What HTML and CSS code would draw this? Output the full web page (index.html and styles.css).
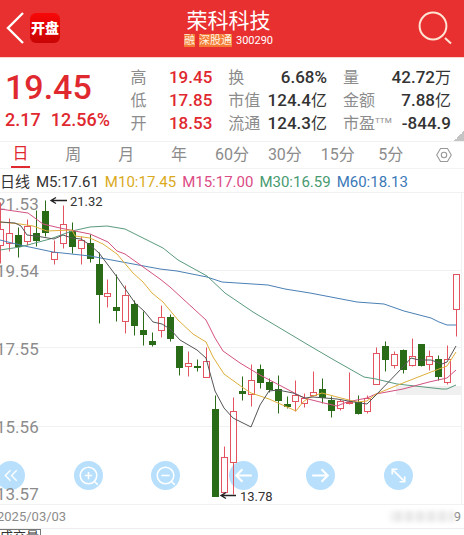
FILE: index.html
```html
<!DOCTYPE html>
<html lang="zh-CN">
<head>
    <meta charset="utf-8">
    <meta name="viewport" content="width=device-width, initial-scale=1">
    <title>荣科科技 300290</title>
    <link rel="stylesheet" href="styles.css">
</head>
<body>
    <header class="header">
        <div class="header-left">
            <button class="icon-button" aria-label="返回">
                <svg width="20" height="34" viewBox="0 0 20 34"><path d="M18 2 3 17l15 15" fill="none" stroke="#fff" stroke-width="2.4"/></svg>
            </button>
            <a class="logo" href="#">开盘</a>
        </div>
        <div class="title">
            <h1>荣科科技</h1>
            <p><span class="tag">融</span><span class="tag">深股通</span><span>300290</span></p>
        </div>
        <button class="icon-button search" aria-label="搜索">
            <svg width="36" height="36" viewBox="0 0 36 36" fill="none" stroke="#ffe3d3" stroke-width="2"><circle cx="17" cy="16" r="13.4"/><path d="m29 28 6 5.5"/></svg>
        </button>
    </header>

    <section class="quote">
        <div class="price">
            <strong>19.45</strong>
            <p><span>2.17</span><span>12.56%</span></p>
        </div>
        <dl class="stats up">
            <dt>高</dt><dd>19.45</dd>
            <dt>低</dt><dd>17.85</dd>
            <dt>开</dt><dd>18.53</dd>
        </dl>
        <dl class="stats">
            <dt>换</dt><dd>6.68%</dd>
            <dt>市值</dt><dd>124.4<span>亿</span></dd>
            <dt>流通</dt><dd>124.3<span>亿</span></dd>
        </dl>
        <dl class="stats">
            <dt>量</dt><dd>42.72<span>万</span></dd>
            <dt>金额</dt><dd>7.88<span>亿</span></dd>
            <dt>市盈<sup>TTM</sup></dt><dd>-844.9</dd>
        </dl>
    </section>

    <nav class="tabs">
        <button class="active">日</button>
        <button>周</button>
        <button>月</button>
        <button>年</button>
        <button>60分</button>
        <button>30分</button>
        <button>15分</button>
        <button>5分</button>
        <button aria-label="设置">
            <svg width="16" height="16" viewBox="0 0 16 16" fill="none" stroke="#999" stroke-width="1.1"><path d="M4.500 1.500h7L15.300 8l-3.800 6.500h-7L.7 8z"/><circle cx="8" cy="8" r="2.700"/></svg>
        </button>
    </nav>

    <div class="averages">
        <span>日线</span>
        <span>M5:17.61</span>
        <span class="m10">M10:17.45</span>
        <span class="m15">M15:17.00</span>
        <span class="m30">M30:16.59</span>
        <span class="m60">M60:18.13</span>
    </div>

    <main class="chart">
        <div class="tools">
            <button aria-label="更早"><svg viewBox="0 0 28 28"><path d="m14 9-5 5 5 5M20 9l-5 5 5 5" stroke-width="1.3"/></svg></button>
            <button aria-label="放大"><svg viewBox="0 0 28 28"><circle cx="14" cy="14" r="8"/><path d="M10.500 14h7M14 10.500v7M20 20l3 3"/></svg></button>
            <button aria-label="缩小"><svg viewBox="0 0 28 28"><circle cx="14" cy="14" r="8"/><path d="M10 14h8M20 20l3 3"/></svg></button>
            <button aria-label="左移"><svg viewBox="0 0 28 28"><path d="M22 14H7M13 8l-6 6 6 6" stroke-width="2"/></svg></button>
            <button aria-label="右移"><svg viewBox="0 0 28 28"><path d="M6 14h15M15 8l6 6-6 6" stroke-width="2"/></svg></button>
            <button aria-label="全屏"><svg viewBox="0 0 28 28"><path d="m9 9 10 10M8 13V8h5M20 15v5h-5" stroke-width="1.6"/></svg></button>
        </div>
        <svg class="plot" viewBox="0 192 464 313">
            <path class="grid" d="M0 192.500h464M0 270.500h461M0 347.500h461M0 426.500h461M0 504.500h464M461.500 192v313"/>
            <path fill="#f0f0f0" d="M396 386h65v9h-65z"/>
            <g class="axis">
                <text x="-4" y="210">21.53</text>
                <text x="-4" y="277">19.54</text>
                <text x="-4" y="355">17.55</text>
                <text x="-4" y="433">15.56</text>
                <text x="-4" y="500">13.57</text>
            </g>
            <g id="candles"></g>
            <g class="lines">
                <polyline class="line60" points="0,240 20,245 53,252 90,256 117,261 160,269 177,271 207,277 222,282 268,285 285,289 310,293 357,302 384,304 404,311 431,318 439,322 447,325 456,325"/>
                <polyline class="line30" points="0,250 20,247 50,239 72,231 90,227 107,226 125,229 137,235 163,248 178,260 207,276 225,293 253,312 310,346 334,360 364,377 376,379 397,384 442,389 447,389 456,385"/>
                <polyline class="line15" points="0,209 28,213 43,224 60,228 90,234 108,242 117,251 125,254 160,279 170,287 206,320 215,338 223,351 240,363 260,375 283,387 304,398 324,403 337,406 347,402 367,398 376,394 403,389 429,382 447,378 456,370"/>
                <polyline class="line10" points="0,222 20,224 33,226 47,231 72,230 75,236 90,238 103,244 117,254 133,273 143,282 152,293 163,302 178,320 193,334 206,342 213,357 224,374 242,387 251,393 269,399 287,407 296,411 303,402 310,397 322,393 341,398 357,402 367,401 376,394 403,383 431,372 447,366 456,352"/>
                <polyline class="line5" points="0,222 15,223 21,226 27,235 36,236 54,239 63,235 72,238 81,239 90,245 99,253 117,277 135,303 144,311 153,322 162,324 170,329 180,340 197,350 206,358 210,373 215,391 224,408 233,418 251,427 260,405 269,391 278,390 293,393 305,398 313,397 337,399 354,402 367,404 376,395 403,367 411,358 419,360 431,360 442,364 447,362 456,346"/>
            </g>
            <g class="marks">
                <path d="M52 200.500h15M56 197.500l-5 3 5 3M222 495.500h14M226 492.500l-5 3 5 3"/>
                <text x="70" y="206">21.32</text>
                <text x="240" y="501">13.78</text>
            </g>
        </svg>
    </main>

    <div class="dates">
        <span class="from">2025/03/03</span>
        <span class="faded"><i></i>9</span>
    </div>
    <div class="volume"><span>成交量</span></div>

    <script src="script.js"></script>
</body>
</html>
```

FILE: styles.css
```css
* {
    box-sizing: border-box;
}
html {
    overflow: hidden;
}
body {
    margin: 0;
    background-color: #fff;
    color: #333;
    font-family: Roboto, "Noto Sans CJK SC", sans-serif;
}
h1, p, dl, dd {
    margin: 0;
}
button {
    padding: 0;
    border: none;
    background: none;
    color: inherit;
    font: inherit;
    cursor: pointer;
}
svg {
    display: block;
}

/* Header */
.header {
    display: grid;
    grid-template-columns: 1fr auto 1fr;
    align-items: center;
    height: 58px;
    padding: 0 12px 2px 5px;
    background-color: #e93030;
    border-bottom: 1px solid #fbd5cc;
    color: #fff;
}
.header-left {
    display: flex;
    align-items: center;
    gap: 5px;
}
.logo {
    width: 30px;
    height: 30px;
    border-radius: 6px;
    background: linear-gradient(#f80808, #c80505);
    color: #fff;
    font-size: 14px;
    font-weight: 900;
    line-height: 30px;
    text-align: center;
    text-decoration: none;
}
.title {
    text-align: center;
}
.title h1 {
    font-size: 21px;
    font-weight: 400;
    line-height: 26px;
}
.title p {
    display: flex;
    gap: 4px;
    justify-content: center;
    font-size: 11px;
    line-height: 14px;
}
.tag {
    height: 13px;
    background-color: #f47b35;
    color: #fff3e4;
}
.search {
    justify-self: end;
}

/* Quote */
.quote {
    display: grid;
    grid-template-columns: 115fr 82fr 99fr 107fr;
    gap: 16px;
    height: 84px;
    padding: 8px 13px 0 0;
    border-bottom: 1px solid #f1f1f1;
    background: linear-gradient(135deg, transparent 50%, #c4c4c4 50%) right bottom / 10px 10px no-repeat;
}
.price {
    padding-left: 5px;
    color: #e0282f;
    font-weight: 500;
    white-space: nowrap;
}
.price strong {
    display: block;
    font-size: 34px;
    font-weight: 500;
    line-height: 42px;
}
.price p {
    display: flex;
    gap: 10px;
    font-size: 18px;
    line-height: 24px;
}
.stats {
    display: grid;
    grid-template-columns: auto 1fr;
    grid-auto-rows: 23px;
    line-height: 23px;
    white-space: nowrap;
}
.stats dt {
    color: #8c8c8c;
    font-size: 16px;
}
.stats dd {
    font-size: 17px;
    font-weight: 500;
    text-align: right;
}
.stats dd span {
    font-size: 16px;
    font-weight: 400;
}
.stats sup {
    font-size: 8px;
    line-height: 0;
}
.up dd {
    color: #e0282f;
}

/* Period tabs */
.tabs {
    display: grid;
    grid-template-columns: repeat(9, 1fr);
    height: 27px;
    margin: 0 -6px;
    border-bottom: 1px solid #f4f4f4;
    color: #8c8c8c;
    font-size: 16px;
    line-height: 24px;
}
.tabs button {
    display: flex;
    justify-content: center;
    align-items: center;
}
.tabs .active {
    justify-self: center;
    width: 19px;
    border-bottom: 2px solid #e0282f;
    color: #e0282f;
}
.averages {
    display: flex;
    gap: 6px;
    height: 23px;
    font-size: 15px;
    line-height: 27px;
    white-space: nowrap;
}
.m10 { color: #dbaa1c; }
.m15 { color: #dc4b85; }
.m30 { color: #479a70; }
.m60 { color: #3b78b7; }

/* Chart */
.chart {
    position: relative;
}
.plot {
    position: relative;
    width: 100%;
    pointer-events: none;
}
.tools {
    position: absolute;
    right: 51px;
    bottom: 15px;
    left: -4px;
    display: flex;
    justify-content: space-between;
}
.tools button {
    width: 29px;
    height: 29px;
    border-radius: 50%;
    background-color: #b8e0fd;
}
.tools svg {
    fill: none;
    stroke: #fff;
    stroke-width: 1.5;
}
.grid {
    fill: none;
    stroke: #f1f1f1;
}
.axis {
    fill: #8c8c8c;
    font-size: 17px;
}
.lines polyline {
    fill: none;
    stroke-width: 1;
}
.line5 { stroke: #555; }
.line10 { stroke: #dfaf3c; }
.line15 { stroke: #d35282; }
.line30 { stroke: #5b9a7d; }
.line60 { stroke: #4a80b5; }
.rise {
    fill: #fff;
    stroke: #e25560;
}
.fall {
    fill: #2a6b18;
    stroke: #2a6b18;
}
.marks {
    fill: #333;
    font-size: 13px;
}
.marks path {
    fill: none;
    stroke: #222;
    stroke-width: 1.3;
}

/* Below the chart */
.dates {
    display: flex;
    justify-content: space-between;
    height: 24px;
    padding-right: 3px;
    border-bottom: 1px solid #eee;
    color: #8c8c8c;
    font-size: 13px;
    line-height: 23px;
}
.from {
    margin-left: -3px;
}
.faded {
    display: flex;
    align-items: center;
}
.faded i {
    width: 64px;
    height: 11px;
    background: repeating-linear-gradient(90deg, #f2f2f2 0 6px, #ddd 8px, #f6f6f6 11px);
    filter: blur(2px);
}
.volume {
    font-size: 13px;
    line-height: 13px;
}
.volume span {
    display: inline-block;
    padding-right: 1px;
    border: 1px solid #777;
    border-left: none;
}
```

FILE: script.js
```js
// x, body top, body bottom, wick top, wick bottom, 1 = rise / 0 = fall
const candles = [
    [0, 229, 245, 202, 263, 1],
    [9, 233, 243, 218, 251, 1],
    [18, 235, 246, 227, 257, 0],
    [27, 226, 241, 219, 245, 1],
    [36, 233, 240, 210, 246, 0],
    [45, 211, 232, 200, 236, 0],
    [54, 252, 259, 240, 264, 1],
    [63, 224, 243, 205, 248, 1],
    [72, 231, 246, 222, 253, 0],
    [81, 240, 248, 236, 264, 1],
    [90, 243, 258, 234, 262, 0],
    [99, 264, 294, 252, 323, 0],
    [107, 293, 296, 279, 307, 1],
    [116, 307, 310, 274, 321, 0],
    [125, 295, 321, 285, 333, 1],
    [134, 304, 325, 300, 335, 0],
    [143, 330, 334, 311, 345, 0],
    [152, 341, 344, 332, 346, 0],
    [161, 317, 330, 305, 337, 1],
    [170, 317, 338, 314, 341, 0],
    [179, 346, 367, 346, 375, 0],
    [188, 363, 366, 351, 376, 1],
    [197, 366, 367, 359, 371, 0],
    [206, 361, 377, 347, 377, 1],
    [215, 409, 496, 395, 496, 0],
    [224, 457, 492, 446, 494, 1],
    [233, 411, 462, 397, 494, 1],
    [242, 391, 393, 376, 400, 0],
    [251, 380, 394, 364, 406, 1],
    [260, 369, 382, 364, 388, 0],
    [269, 382, 389, 378, 392, 0],
    [278, 389, 400, 375, 413, 0],
    [287, 404, 406, 396, 408, 0],
    [295, 395, 401, 380, 411, 1],
    [304, 398, 403, 393, 407, 1],
    [313, 392, 395, 371, 396, 1],
    [322, 389, 397, 378, 403, 0],
    [331, 400, 410, 396, 417, 0],
    [340, 401, 408, 399, 410, 1],
    [349, 402, 403, 372, 404, 1],
    [358, 402, 413, 395, 414, 0],
    [367, 398, 411, 395, 413, 1],
    [376, 353, 384, 347, 384, 1],
    [385, 346, 359, 341, 371, 0],
    [394, 354, 365, 351, 368, 1],
    [403, 350, 369, 349, 373, 0],
    [412, 356, 365, 338, 366, 1],
    [421, 344, 365, 344, 366, 0],
    [429, 356, 364, 350, 370, 1],
    [438, 359, 376, 355, 380, 0],
    [447, 359, 382, 345, 384, 1],
    [456, 274, 309, 274, 336, 1]
];

function drawCandles() {
    let html = "";
    for (const [x, top, bottom, high, low, rise] of candles) {
        html += `<g class="${rise ? "rise" : "fall"}" transform="translate(.5 .5)">`;
        html += `<path d="M${x} ${high}V${top}M${x} ${bottom}V${low}"/>`;
        html += `<rect x="${x - 3}" y="${top}" width="6" height="${bottom - top}"/></g>`;
    }
    document.getElementById("candles").innerHTML = html;
}

drawCandles();
```
